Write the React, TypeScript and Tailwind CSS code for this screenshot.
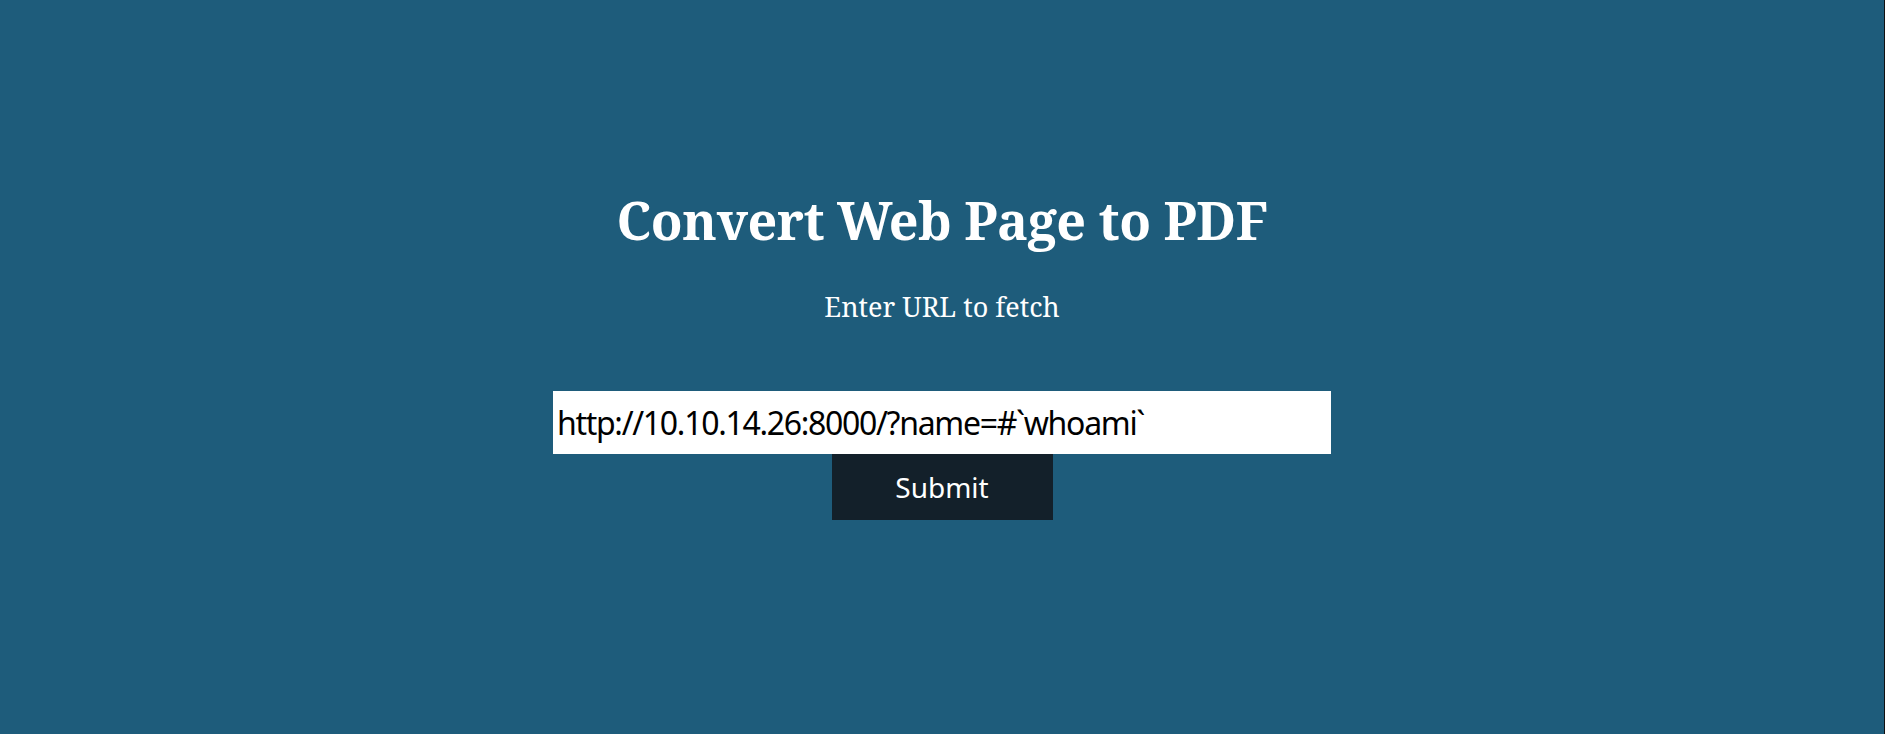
export default function App() {
  return (
    <div className="flex h-[734px] w-full bg-white">
      <main className="flex h-full flex-1 flex-col items-center bg-[#1e5c7b] text-white">
        <h1 className="mt-[187px] text-[52px] font-bold leading-tight tracking-[-0.5px] [font-family:'Noto_Serif','DejaVu_Serif',serif]">
          Convert Web Page to PDF
        </h1>
        <p className="mt-[38px] text-[27px] leading-tight [font-family:'Noto_Serif','DejaVu_Serif',serif]">
          Enter URL to fetch
        </p>
        <form className="mt-[67px] flex flex-col items-center" onSubmit={(e) => e.preventDefault()}>
          <input
            type="text"
            defaultValue="http://10.10.14.26:8000/?name=#`whoami`"
            className="h-[63px] w-[778px] bg-white px-[4px] text-[32px] tracking-[-1.3px] text-black outline-none [font-family:'Noto_Sans','Open_Sans',sans-serif]"
          />
          <button
            type="submit"
            className="h-[66px] w-[221px] bg-[#13202a] text-[28px] text-white [font-family:'Noto_Sans','Open_Sans',sans-serif]"
          >
            Submit
          </button>
        </form>
      </main>
      <div className="h-full w-[16px] border-l border-[#111] bg-white" />
    </div>
  );
}
